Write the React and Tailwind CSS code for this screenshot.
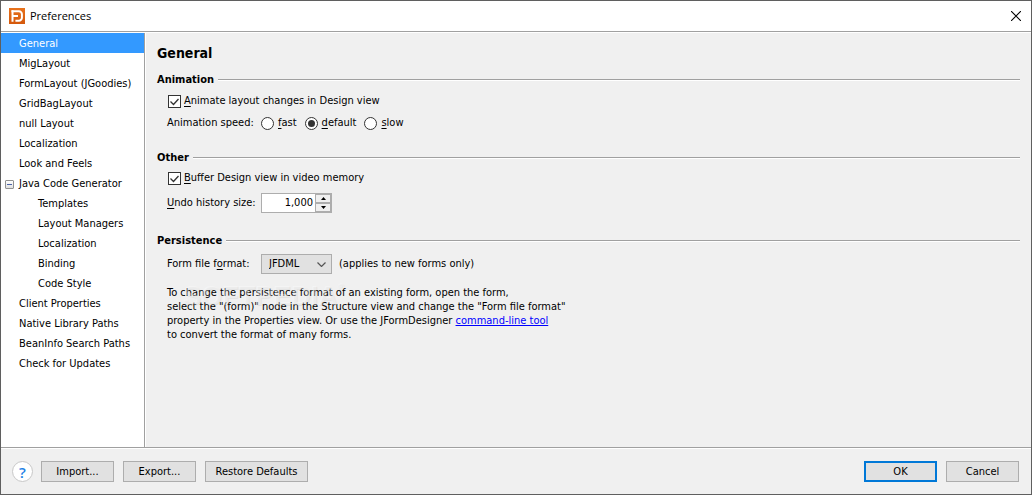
import React from "react";

const NAV = [
  { label: "General", selected: true },
  { label: "MigLayout" },
  { label: "FormLayout (JGoodies)" },
  { label: "GridBagLayout" },
  { label: "null Layout" },
  { label: "Localization" },
  { label: "Look and Feels" },
  {
    label: "Java Code Generator",
    children: ["Templates", "Layout Managers", "Localization", "Binding", "Code Style"],
  },
  { label: "Client Properties" },
  { label: "Native Library Paths" },
  { label: "BeanInfo Search Paths" },
  { label: "Check for Updates" },
];

function AppIcon() {
  return (
    <svg viewBox="0 0 16 16" className="size-4" aria-hidden="true">
      <defs>
        <linearGradient id="icon-fill" x1="0" y1="0" x2="0" y2="1">
          <stop offset="0" stopColor="#e8721c" />
          <stop offset="1" stopColor="#d4580c" />
        </linearGradient>
      </defs>
      <rect width="16" height="16" fill="url(#icon-fill)" />
      <path d="M2.5 3.3h7.4a3 3 0 0 1 3 3v3.4a3 3 0 0 1-3 3H6.4" fill="none" stroke="#fff" strokeWidth="2" />
      <path d="M3.5 2.3v11.4M3.5 8h5.5" fill="none" stroke="#fff" strokeWidth="2" />
    </svg>
  );
}

function TitleBar() {
  return (
    <header className="flex h-[31px] items-center border-b border-[#a0a0a0] bg-white pl-2 pr-[5px]">
      <AppIcon />
      <h1 className="ml-[5px] flex-1 font-['Open_Sans',sans-serif] text-[11px] leading-4">Preferences</h1>
      <button type="button" aria-label="Close" className="grid size-5 place-items-center">
        <svg viewBox="0 0 10 10" className="size-2.5" aria-hidden="true">
          <path d="M0 0l10 10M10 0L0 10" stroke="#000" strokeWidth="1.1" fill="none" />
        </svg>
      </button>
    </header>
  );
}

function Sidebar() {
  return (
    <nav aria-label="Preference pages" className="w-36 shrink-0 border-r border-[#a0a0a0] bg-white">
      <ul>
        {NAV.map((item) => (
          <li key={item.label}>
            <div className={item.selected ? "flex h-5 items-center bg-[#3399ff] pl-1 pt-0.5 text-white" : "flex h-5 items-center pl-1 pt-0.5"}>
              <span className="w-[14px] shrink-0">
                {item.children && (
                  <button
                    type="button"
                    aria-label="Collapse"
                    className="grid size-[9px] place-items-center rounded-[1px] border border-[#919191] bg-linear-to-b from-white to-[#e0e0e0]"
                  >
                    <span className="h-px w-[5px] bg-[#4b63a7]" />
                  </button>
                )}
              </span>
              <a href="#page">{item.label}</a>
            </div>
            {item.children && (
              <ul>
                {item.children.map((child) => (
                  <li key={child} className="flex h-5 items-center pl-[37px] pt-0.5">
                    <a href="#page">{child}</a>
                  </li>
                ))}
              </ul>
            )}
          </li>
        ))}
      </ul>
    </nav>
  );
}

function Section({ title, children }) {
  return (
    <section>
      <div className="flex h-4 items-center gap-1">
        <h3 className="font-bold">{title}</h3>
        <div className="h-0.5 flex-1 border-b border-white bg-[#a0a0a0]" />
      </div>
      <div className="pl-2.5">{children}</div>
    </section>
  );
}

function Key({ children }) {
  return <span className="underline underline-offset-2">{children}</span>;
}

function CheckBox({ id, children }) {
  return (
    <div className="flex h-[14px] items-center pl-px">
      <span className="relative mr-[3px] size-[13px]">
        <input
          id={id}
          type="checkbox"
          defaultChecked
          className="peer block size-[13px] appearance-none border border-[#333] bg-white"
        />
        <svg
          viewBox="0 0 13 13"
          className="pointer-events-none absolute inset-0 hidden size-[13px] peer-checked:block"
          aria-hidden="true"
        >
          <path d="M2.5 6.5l3 3 5-5.5" fill="none" stroke="#333" strokeWidth="1.3" />
        </svg>
      </span>
      <label htmlFor={id}>{children}</label>
    </div>
  );
}

function Radio({ id, checked, children }) {
  return (
    <span className="flex items-center gap-1">
      <input
        id={id}
        type="radio"
        name="speed"
        defaultChecked={checked}
        className="grid size-[13px] appearance-none place-items-center rounded-full border border-[#333] bg-white before:hidden before:size-[7px] before:rounded-full before:bg-[#333] checked:before:block"
      />
      <label htmlFor={id}>{children}</label>
    </span>
  );
}

function PushButton({ primary, className, children }) {
  return (
    <button
      type="button"
      className={`h-[21px] bg-[#e1e1e1] ${primary ? "border-2 border-[#0078d7]" : "border border-[#adadad]"} ${className}`}
    >
      {children}
    </button>
  );
}

export default function App() {
  return (
    <div className="flex min-h-screen flex-col border border-[#5f5f5f] bg-[#f0f0f0] font-['DejaVu_Sans_Condensed','DejaVu_Sans',sans-serif] text-[11px] leading-[14px] text-black">
      <TitleBar />
      <div className="flex flex-1 border-y border-b-[#a0a0a0] border-t-white">
        <Sidebar />
        <main className="min-w-0 flex-1 border-l border-white pb-4 pl-[11px] pr-[11px] pt-2.5">
          <h2 className="text-[14px] font-bold leading-5">General</h2>
          <div className="mt-[9px] flex flex-col">
            <Section title="Animation">
              <div className="mt-1.5">
                <CheckBox id="animate">
                  <Key>A</Key>nimate layout changes in Design view
                </CheckBox>
              </div>
              <div className="mt-2 flex h-[14px] items-center">
                <span className="w-[94px]">Animation speed:</span>
                <div role="radiogroup" aria-label="Animation speed" className="flex gap-2">
                  <Radio id="fast">
                    <Key>f</Key>ast
                  </Radio>
                  <Radio id="default" checked>
                    <Key>d</Key>efault
                  </Radio>
                  <Radio id="slow">
                    <Key>s</Key>low
                  </Radio>
                </div>
              </div>
            </Section>

            <div className="mt-5">
              <Section title="Other">
                <div className="mt-[5px]">
                  <CheckBox id="buffer">
                    <Key>B</Key>uffer Design view in video memory
                  </CheckBox>
                </div>
                <div className="mt-2 flex items-center">
                  <label htmlFor="undo" className="w-[94px]">
                    <Key>U</Key>ndo history size:
                  </label>
                  <div className="flex h-5 w-[71px] border border-[#adadad] bg-white">
                    <input id="undo" type="text" defaultValue="1,000" className="w-0 flex-1 bg-white pr-0.5 text-right" />
                    <div className="flex w-4 flex-col">
                      <button type="button" aria-label="Increase" className="grid flex-1 place-items-center border border-[#adadad] bg-[#f0f0f0]">
                        <svg viewBox="0 0 5 3" className="h-[3px] w-[5px]" aria-hidden="true">
                          <path d="M0 3L2.5 0L5 3z" />
                        </svg>
                      </button>
                      <button type="button" aria-label="Decrease" className="grid flex-1 place-items-center border border-[#adadad] bg-[#f0f0f0]">
                        <svg viewBox="0 0 5 3" className="h-[3px] w-[5px]" aria-hidden="true">
                          <path d="M0 0L2.5 3L5 0z" />
                        </svg>
                      </button>
                    </div>
                  </div>
                </div>
              </Section>
            </div>

            <div className="mt-5">
              <Section title="Persistence">
                <div className="mt-[5px] flex items-center">
                  <label htmlFor="format" className="w-[94px]">
                    Form file f<Key>o</Key>rmat:
                  </label>
                  <div className="relative w-[71px]">
                    <select
                      id="format"
                      className="block h-5 w-full appearance-none border border-[#adadad] bg-[#e1e1e1] pl-[7px] leading-[14px]"
                    >
                      <option>JFDML</option>
                    </select>
                    <svg viewBox="0 0 9 5" className="pointer-events-none absolute right-1.5 top-2 h-[5px] w-[9px]" aria-hidden="true">
                      <path d="M0.5 0.5l4 4 4-4" fill="none" stroke="#555" strokeWidth="1.2" />
                    </svg>
                  </div>
                  <span className="ml-[7px]">(applies to new forms only)</span>
                </div>
                <div className="relative mt-3">
                  <p>
                    To change the persistence format of an existing form, open the form,
                    <br />
                    select the "(form)" node in the Structure view and change the "Form file format"
                    <br />
                    property in the Properties view. Or use the JFormDesigner{" "}
                    <a href="#command-line" className="text-[#0000ff] underline">
                      command-line tool
                    </a>
                    <br />
                    to convert the format of many forms.
                  </p>
                  <div className="pointer-events-none absolute -top-1 left-4 flex items-start font-['Liberation_Sans',sans-serif] font-bold text-white/35 [text-shadow:1px_1px_1px_rgba(0,0,0,0.06)]">
                    <span className="text-[27px] leading-7">SOFTPEDIA</span>
                    <span className="text-[9px] leading-[10px]">®</span>
                  </div>
                </div>
              </Section>
            </div>
          </div>
        </main>
      </div>
      <footer className="flex items-center border-t border-white py-3 pl-[11px] pr-3">
        <button
          type="button"
          aria-label="Help"
          className="mr-2 grid size-[21px] place-items-center rounded-full border border-[#c8c8c8] bg-white font-['Open_Sans',sans-serif] text-[15px] font-semibold text-[#1e82e6]"
        >
          ?
        </button>
        <div className="flex flex-1 gap-[9px]">
          <PushButton className="w-[73px]">Import...</PushButton>
          <PushButton className="w-[73px]">Export...</PushButton>
          <PushButton className="w-[103px]">Restore Defaults</PushButton>
        </div>
        <div className="flex gap-[9px]">
          <PushButton primary className="w-[73px]">OK</PushButton>
          <PushButton className="w-[73px]">Cancel</PushButton>
        </div>
      </footer>
    </div>
  );
}
